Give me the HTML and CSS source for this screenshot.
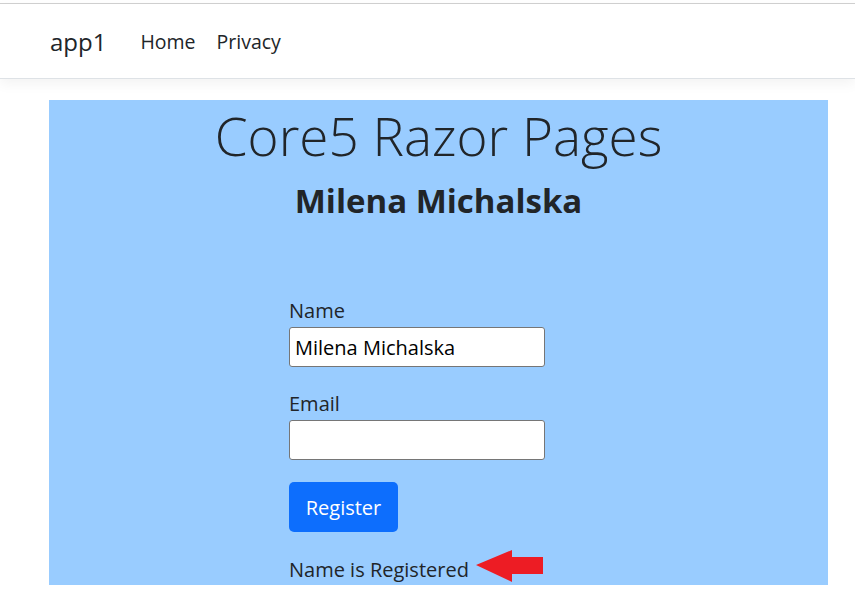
FILE: index.html
```html
<!DOCTYPE html>
<html>
<head>
<meta charset="utf-8">
<link rel="stylesheet" href="styles.css">
</head>
<body>
<header class="navbar">
  <a class="brand" href="#">app1</a>
  <nav class="nav">
    <a class="nav-link" href="#">Home</a>
    <a class="nav-link" href="#">Privacy</a>
  </nav>
</header>
<main class="panel">
  <h1 class="title">Core5 Razor Pages</h1>
  <h2 class="subtitle">Milena Michalska</h2>
  <form class="form">
    <label class="label">Name</label>
    <input class="input" type="text" value="Milena Michalska">
    <label class="label label-2">Email</label>
    <input class="input" type="text" value="">
    <button class="btn" type="button">Register</button>
    <div class="status">
      <span class="status-text">Name is Registered</span>
      <svg class="arrow" width="68" height="33" viewBox="0 0 68 33">
        <polygon points="0,15 36,0 36,7 67,7 67,24 36,24 36,32" fill="#ed1c24"/>
      </svg>
    </div>
  </form>
</main>
</body>
</html>
```
FILE: styles.css
```css
* { box-sizing: border-box; }
html, body { margin: 0; padding: 0; }
body {
  background: #fff;
  font-family: "Open Sans", "Noto Sans", sans-serif;
  color: #212529;
  padding-top: 3px;
}
.navbar {
  display: flex;
  align-items: center;
  height: 76px;
  border-top: 1px solid #cfcfcf;
  border-bottom: 1px solid #dee2e6;
  box-shadow: 0 5px 12px rgba(0,0,0,.05);
  padding-left: 50px;
  background: #fff;
}
.brand {
  font-size: 24px;
  color: #212529;
  text-decoration: none;
  margin-right: 34px;
}
.nav { display: flex; gap: 21px; }
.nav-link {
  font-size: 19.5px;
  color: #212529;
  text-decoration: none;
}
.panel {
  margin: 21px 0 0 49px;
  width: 779px;
  height: 485px;
  background: #99ccff;
  padding-top: 4px;
}
.title {
  margin: 0;
  text-align: center;
  font-weight: 300;
  font-size: 53px;
  line-height: 64px;
}
.subtitle {
  margin: 11px 0 0;
  text-align: center;
  font-weight: 700;
  font-size: 33px;
  line-height: 44px;
}
.form {
  display: flex;
  flex-direction: column;
  align-items: flex-start;
  padding-left: 240px;
  margin-top: 73px;
}
.label {
  font-size: 20px;
  line-height: 30px;
  margin-bottom: 1px;
}
.label-2 { margin-top: 22px; }
.input {
  width: 256px;
  height: 40px;
  border: 1px solid #767676;
  border-radius: 3px;
  font-family: inherit;
  font-size: 20px;
  padding: 0 5px;
  color: #000;
  background: #fff;
}
.btn {
  margin-top: 22px;
  width: 109px;
  height: 50px;
  background: #0d6efd;
  border: none;
  border-radius: 5px;
  color: #fff;
  font-family: inherit;
  font-size: 20px;
}
.status {
  display: flex;
  align-items: center;
  margin-top: 18px;
}
.status-text {
  font-size: 20px;
  line-height: 28px;
}
.arrow {
  margin-left: 7px;
  margin-bottom: 6px;
}
```
